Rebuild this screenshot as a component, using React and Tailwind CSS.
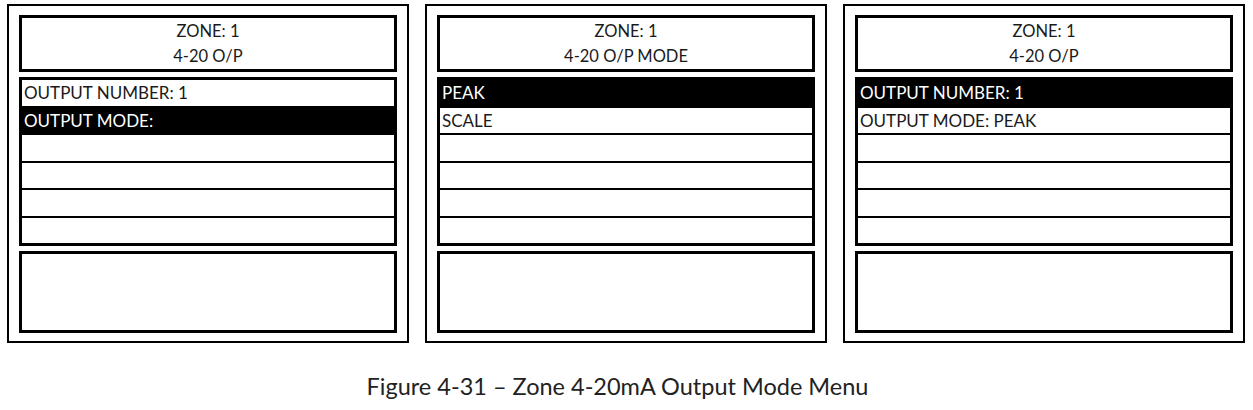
const panels = [
  {
    title: "4-20 O/P",
    rows: ["OUTPUT NUMBER: 1", "OUTPUT MODE:", "", "", "", ""],
    active: 1,
  },
  {
    title: "4-20 O/P MODE",
    rows: ["PEAK", "SCALE", "", "", "", ""],
    active: 0,
  },
  {
    title: "4-20 O/P",
    rows: ["OUTPUT NUMBER: 1", "OUTPUT MODE: PEAK", "", "", "", ""],
    active: 0,
  },
];

function Screen({ title, rows, active }) {
  return (
    <div className="w-[402px] border-2 border-black bg-white px-[10px] pt-[9px] pb-[8px] flex flex-col gap-[5px]">
      <div className="h-[57px] border-[3px] border-black flex flex-col items-center justify-center leading-[25px] text-[16.5px]">
        <div>ZONE: 1</div>
        <div>{title}</div>
      </div>
      <div className="border-[3px] border-black flex flex-col text-[17px]">
        {rows.map((row, i) => (
          <div
            key={i}
            className={
              "box-content h-[25.5px] px-[2px] flex items-center leading-none " +
              (i > 0 ? "border-t-2 border-black " : "") +
              (i === active ? "bg-black text-white" : "")
            }
          >
            {row}
          </div>
        ))}
      </div>
      <div className="h-[82px] border-[3px] border-black" />
    </div>
  );
}

export default function App() {
  return (
    <div className="w-[1253px] h-[410px] bg-white text-[#1a1a1a] font-['Lato',sans-serif]">
      <div className="flex gap-[16px] pl-[7px] pt-[4px]">
        {panels.map((p, i) => (
          <Screen key={i} {...p} />
        ))}
      </div>
      <div className="mt-[26px] pr-[18px] text-center text-[23.5px] text-[#222]">
        Figure 4-31 – Zone 4-20mA Output Mode Menu
      </div>
    </div>
  );
}
